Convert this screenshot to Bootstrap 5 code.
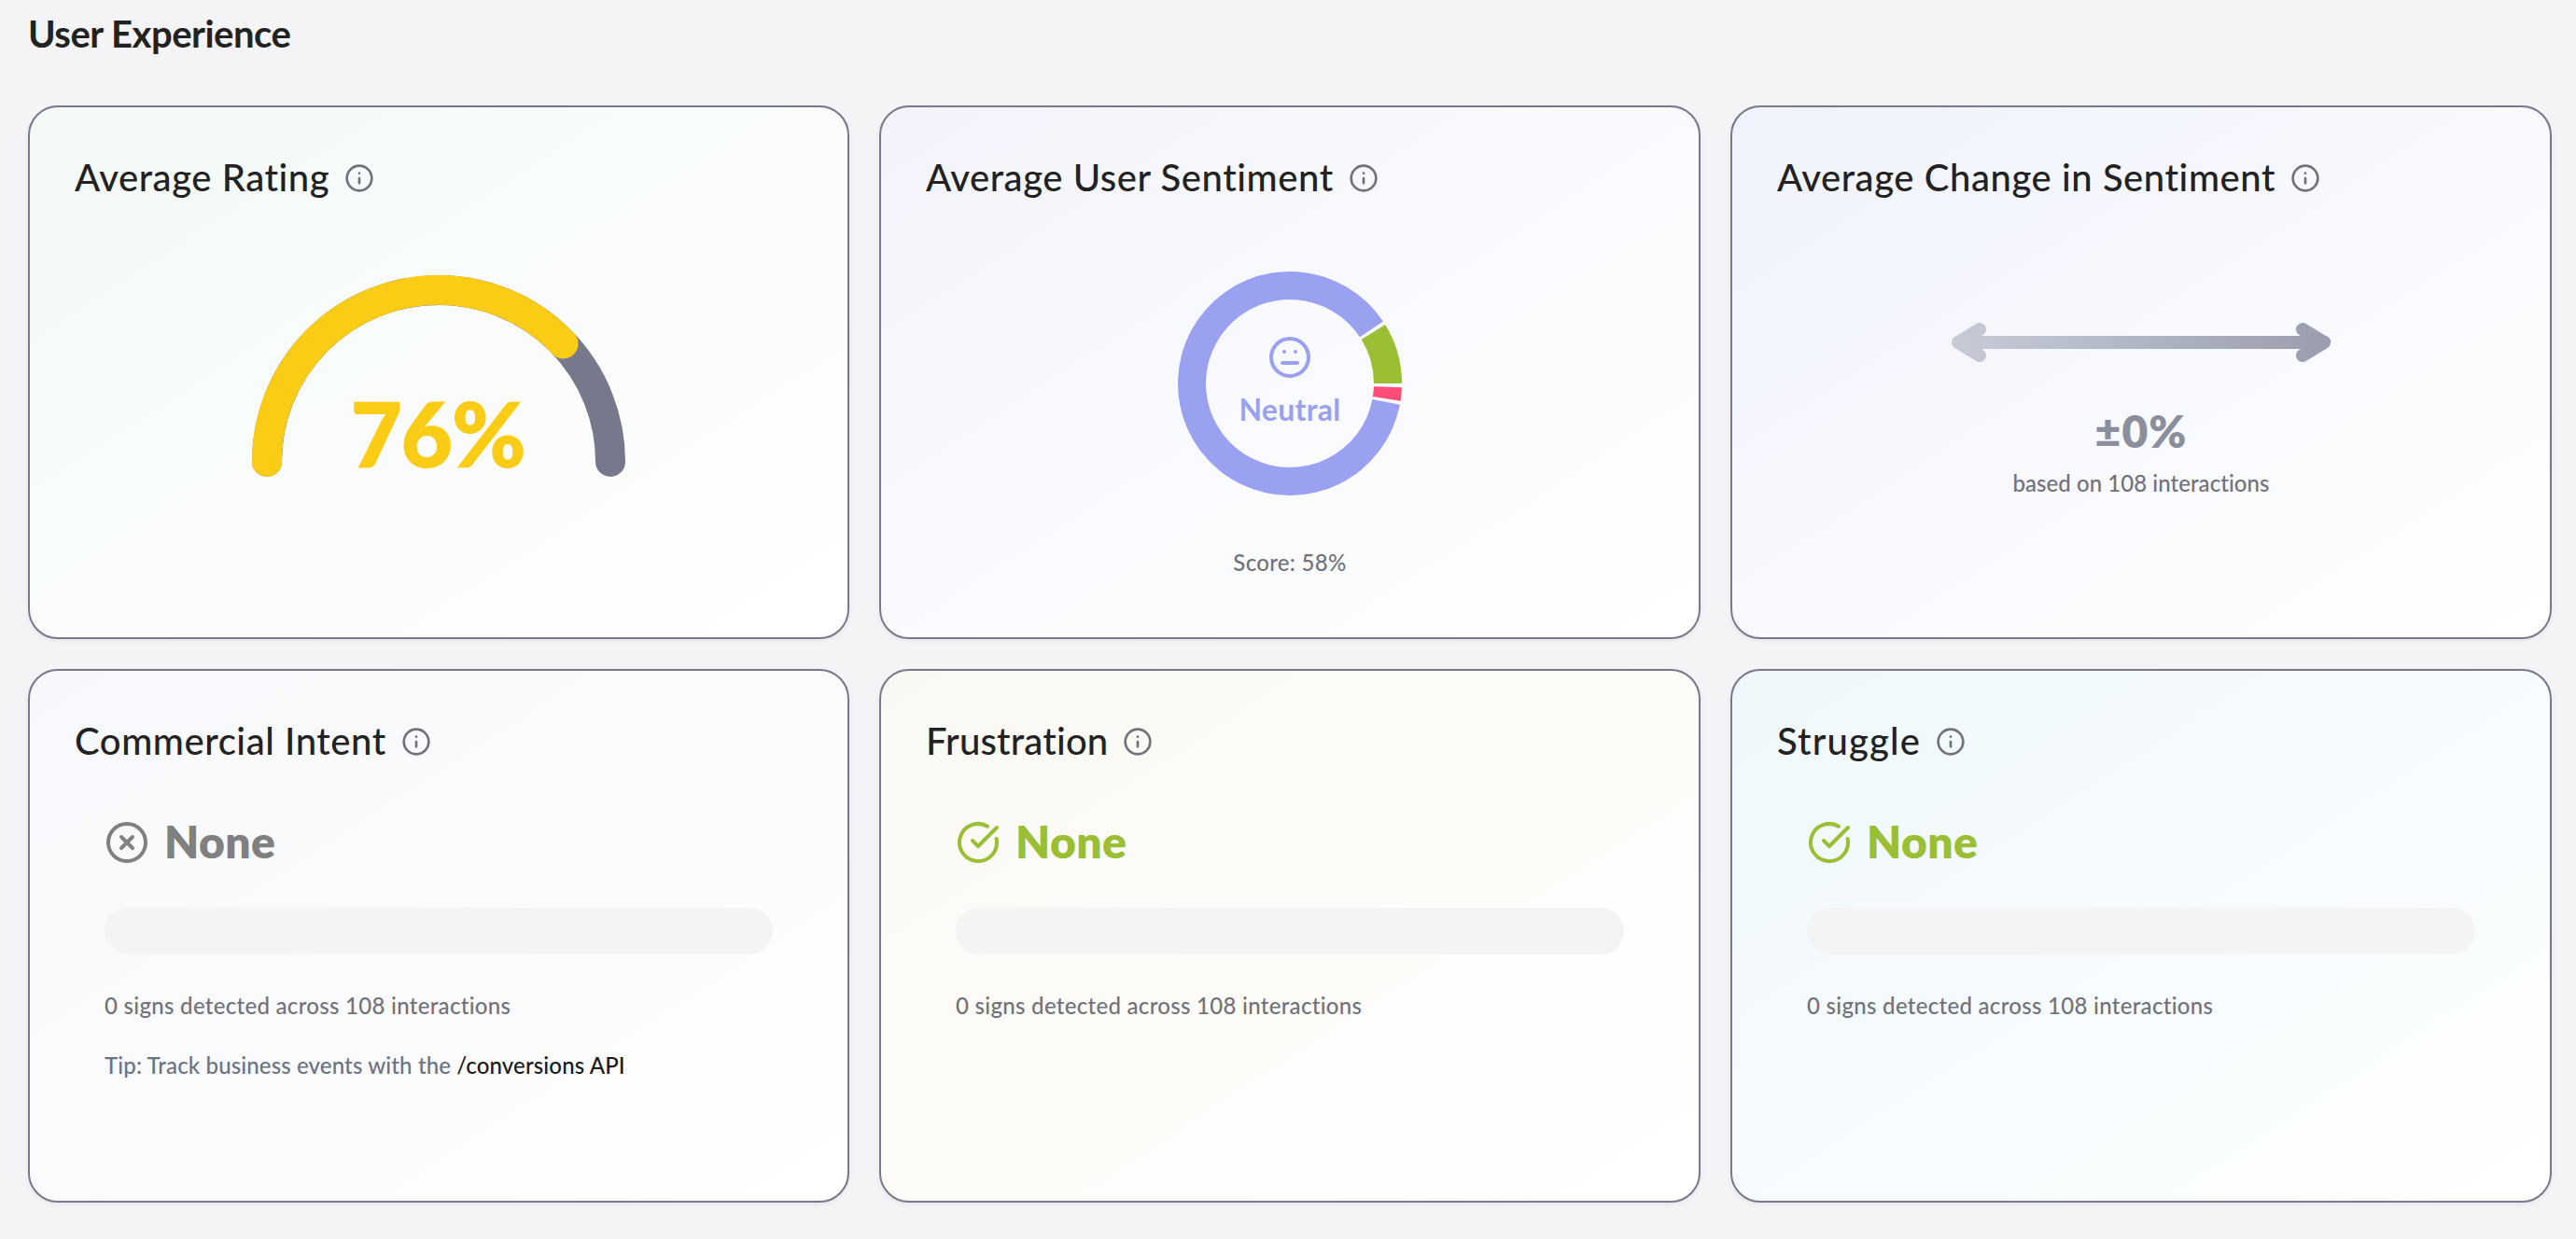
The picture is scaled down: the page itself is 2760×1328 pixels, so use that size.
<!DOCTYPE html>
<html lang="en">
<head>
  <meta charset="UTF-8" />
  <meta name="viewport" content="width=device-width, initial-scale=1" />
  <title>User Experience</title>
  <link
    href="https://cdn.jsdelivr.net/npm/bootstrap@5.3.2/dist/css/bootstrap.min.css"
    rel="stylesheet"
  />
  <style>
    body {
      background: #f4f4f6;
      color: #222;
      font-family: Lato, "Liberation Sans", sans-serif;
      font-variant-ligatures: none;
    }
    .page { padding: 12px 26px 39px 30px; }
    .page-title { font-size: 40px; font-weight: 700; line-height: 48px; letter-spacing: -.5px; margin-bottom: 53px; }
    .metrics { --bs-gutter-x: 32px; --bs-gutter-y: 32px; }

    .metric {
      height: 572px;
      border: 2px solid #78788c;
      border-radius: 32px;
      box-shadow: 0 2px 5px rgba(0, 0, 0, .06);
    }
    .metric .card-body { padding: 51px 48px 0; }
    .bg-rating { background: linear-gradient(to bottom right, #f2f9f7, #f9fcfb 50%, #fff); }
    .bg-sentiment { background: linear-gradient(to bottom right, #f3f4fb, #f9fafd 50%, #fff); }
    .bg-change { background: linear-gradient(to bottom right, #f0f2fd, #f8f9fd 50%, #fff); }
    .bg-intent { background: linear-gradient(to bottom right, #f7f8fb, #fbfbfd 50%, #fff); }
    .bg-frustration { background: linear-gradient(to bottom right, #faf8f2, #fdfcf9 50%, #fff); }
    .bg-struggle { background: linear-gradient(to bottom right, #eff8fb, #f6fbfd 50%, #fff); }

    .metric-title { font-size: 40px; font-weight: 500; line-height: 48px; letter-spacing: .57px; color: #222; }
    .metric-title.tight { letter-spacing: .2px; }
    .metric-title.loose { letter-spacing: 1.15px; }
    .info { width: 32px; height: 32px; margin: 2px 0 0 16px; color: #71717a; }
    .line-icon { fill: none; stroke: currentColor; stroke-width: 2; stroke-linecap: round; stroke-linejoin: round; }

    .note { font-size: 24px; font-weight: 500; line-height: 32px; letter-spacing: .3px; color: #71717a; }
    .gauge { margin-top: 81px; }
    .gauge-value { font-size: 96px; font-weight: 800; letter-spacing: -1.5px; fill: #facc15; }
    .donut { margin-top: 77px; color: #99a1f0; }
    .donut-label { font-size: 32px; font-weight: 700; letter-spacing: .3px; fill: #99a1f0; }
    .score { margin-top: 56px; }
    .arrow { margin-top: 132px; }
    .change-value { font-size: 48px; font-weight: 800; line-height: 56px; letter-spacing: 1px; color: #8b8e9c; margin: 46px 0 12px; }
    .based { letter-spacing: .05px; }

    .signs { padding: 61px 32px 0; }
    .level { gap: 16px; font-size: 48px; font-weight: 800; line-height: 48px; letter-spacing: .4px; color: #9abe34; }
    .level.muted { color: #808080; }
    .level span { margin-top: -3px; }
    .track { height: 50px; border-radius: 25px; background: #f4f4f4; margin: 46px 0 39px; }
    .tip { letter-spacing: .14px; color: #6b7280; margin-top: 32px; }
    .tip a { color: #18181b; }
  </style>
</head>
<body>
  <!-- Shared icons -->
  <svg class="d-none">
    <symbol id="i-info" viewBox="0 0 24 24"><circle cx="12" cy="12" r="10" /><path d="M12 16v-4M12 8h.01" /></symbol>
    <symbol id="i-check" viewBox="0 0 24 24"><path d="M21.801 10A10 10 0 1 1 17 3.335" /><path d="m9 11 3 3L22 4" /></symbol>
    <symbol id="i-x" viewBox="0 0 24 24"><circle cx="12" cy="12" r="10" /><path d="m15 9-6 6M9 9l6 6" /></symbol>
    <symbol id="i-meh" viewBox="0 0 24 24"><circle cx="12" cy="12" r="10" /><path d="M8 15h8M9 9h.01M15 9h.01" /></symbol>
  </svg>

  <main class="page">
    <h1 class="page-title mt-0">User Experience</h1>

    <div class="row metrics">
      <div class="col-4">
        <div class="card metric bg-rating">
          <div class="card-body d-flex flex-column">
            <div class="d-flex align-items-center">
              <h2 class="metric-title mb-0">Average Rating</h2>
              <svg class="info line-icon"><use href="#i-info" /></svg>
            </div>
            <svg class="gauge align-self-center" width="400" height="250" viewBox="0 0 400 250">
              <g fill="none" stroke-width="32" stroke-linecap="round">
                <path d="M16 200A184 184 0 0 1 384 200" stroke="#78788c" />
                <path id="gaugeArc" stroke="#facc15" />
              </g>
              <text class="gauge-value" x="199" y="206" text-anchor="middle">76%</text>
            </svg>
          </div>
        </div>
      </div>

      <div class="col-4">
        <div class="card metric bg-sentiment">
          <div class="card-body d-flex flex-column">
            <div class="d-flex align-items-center">
              <h2 class="metric-title mb-0">Average User Sentiment</h2>
              <svg class="info line-icon"><use href="#i-info" /></svg>
            </div>
            <svg class="donut align-self-center" width="240" height="240" viewBox="0 0 240 240">
              <g id="donutArcs"></g>
              <svg class="line-icon" x="96" y="68" width="48" height="48"><use href="#i-meh" /></svg>
              <text class="donut-label" x="120" y="160" text-anchor="middle">Neutral</text>
            </svg>
            <div class="note score text-center">Score: 58%</div>
          </div>
        </div>
      </div>

      <div class="col-4">
        <div class="card metric bg-change">
          <div class="card-body d-flex flex-column">
            <div class="d-flex align-items-center">
              <h2 class="metric-title mb-0">Average Change in Sentiment</h2>
              <svg class="info line-icon"><use href="#i-info" /></svg>
            </div>
            <svg class="arrow align-self-center" width="408" height="42" viewBox="0 0 408 42">
              <defs>
                <linearGradient id="fade" gradientUnits="userSpaceOnUse" x1="0" y1="0" x2="408" y2="0">
                  <stop offset="0" stop-color="#c8cad6" />
                  <stop offset=".3" stop-color="#b9bfcd" />
                  <stop offset="1" stop-color="#999dae" />
                </linearGradient>
              </defs>
              <g fill="none" stroke="url(#fade)" stroke-width="14" stroke-linejoin="round">
                <path d="M8 21H400.5V21.01" />
                <path d="M31 7L8 21L31 35M377 7L400 21L377 35" stroke-linecap="round" />
              </g>
            </svg>
            <div class="change-value text-center">±0%</div>
            <div class="note based text-center">based on 108 interactions</div>
          </div>
        </div>
      </div>

      <div class="col-4">
        <div class="card metric bg-intent">
          <div class="card-body">
            <div class="d-flex align-items-center">
              <h2 class="metric-title mb-0">Commercial Intent</h2>
              <svg class="info line-icon"><use href="#i-info" /></svg>
            </div>
            <div class="signs">
              <div class="level muted d-flex align-items-center">
                <svg class="line-icon" width="48" height="48"><use href="#i-x" /></svg>
                <span>None</span>
              </div>
              <div class="track"></div>
              <div class="note">0 signs detected across 108 interactions</div>
              <div class="note tip">Tip: Track business events with the <a href="#" class="text-decoration-none">/conversions API</a></div>
            </div>
          </div>
        </div>
      </div>

      <div class="col-4">
        <div class="card metric bg-frustration">
          <div class="card-body">
            <div class="d-flex align-items-center">
              <h2 class="metric-title tight mb-0">Frustration</h2>
              <svg class="info line-icon"><use href="#i-info" /></svg>
            </div>
            <div class="signs">
              <div class="level d-flex align-items-center">
                <svg class="line-icon" width="48" height="48"><use href="#i-check" /></svg>
                <span>None</span>
              </div>
              <div class="track"></div>
              <div class="note">0 signs detected across 108 interactions</div>
            </div>
          </div>
        </div>
      </div>

      <div class="col-4">
        <div class="card metric bg-struggle">
          <div class="card-body">
            <div class="d-flex align-items-center">
              <h2 class="metric-title loose mb-0">Struggle</h2>
              <svg class="info line-icon"><use href="#i-info" /></svg>
            </div>
            <div class="signs">
              <div class="level d-flex align-items-center">
                <svg class="line-icon" width="48" height="48"><use href="#i-check" /></svg>
                <span>None</span>
              </div>
              <div class="track"></div>
              <div class="note">0 signs detected across 108 interactions</div>
            </div>
          </div>
        </div>
      </div>
    </div>
  </main>

  <script>
    // angles are in degrees, counter-clockwise from 3 o'clock
    function point(cx, cy, r, deg) {
      const a = deg * Math.PI / 180;
      return (cx + r * Math.cos(a)).toFixed(2) + ' ' + (cy - r * Math.sin(a)).toFixed(2);
    }

    const rating = 0.7585;
    document.getElementById('gaugeArc').setAttribute('d',
      `M16 200A184 184 0 0 1 ${point(200, 200, 184, 180 - rating * 180)}`);

    const slices = [
      { from: 0, to: 31.6, color: '#9abe34' },
      { from: 33.6, to: 349.1, color: '#99a1f0' },
      { from: 351, to: 358, color: '#ff4d78' }
    ];

    document.getElementById('donutArcs').innerHTML = slices.map(s => {
      const large = s.to - s.from > 180 ? 1 : 0;
      return `<path fill="${s.color}" d="M${point(120, 120, 120, s.from)}
        A120 120 0 ${large} 0 ${point(120, 120, 120, s.to)}
        L${point(120, 120, 90, s.to)}
        A90 90 0 ${large} 1 ${point(120, 120, 90, s.from)}Z" />`;
    }).join('');
  </script>

  <script src="https://cdn.jsdelivr.net/npm/bootstrap@5.3.2/dist/js/bootstrap.bundle.min.js"></script>
</body>
</html>
